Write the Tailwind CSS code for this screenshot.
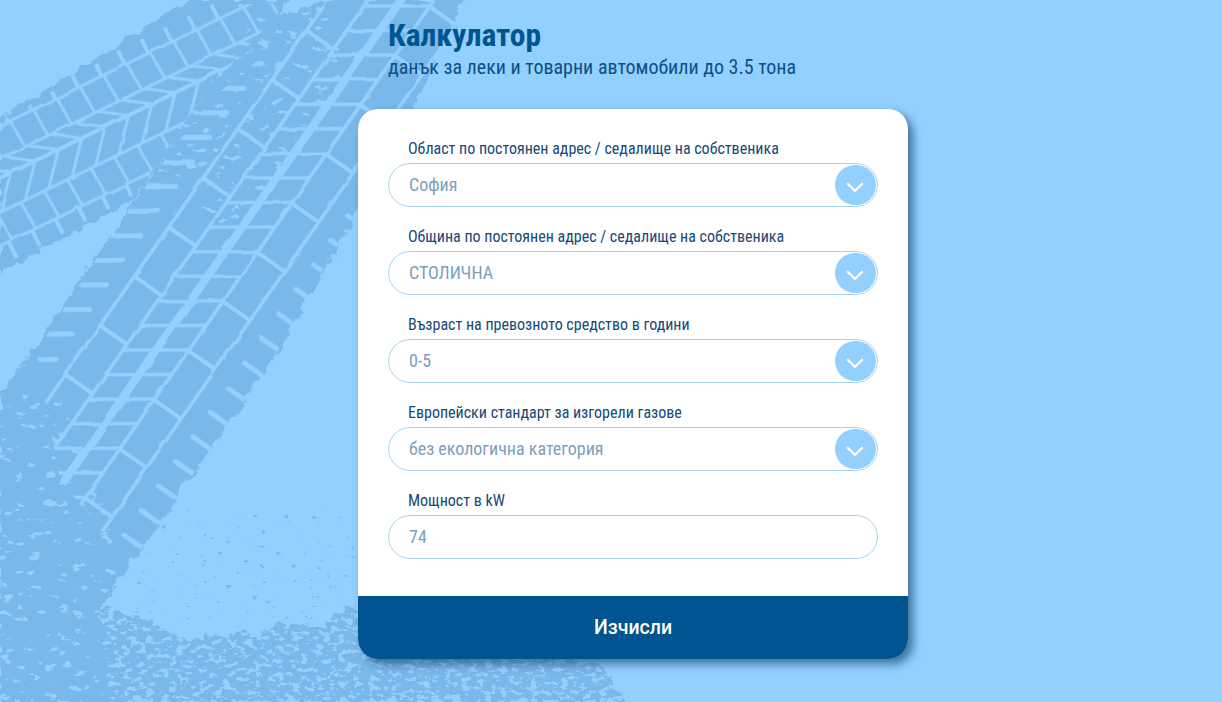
<!DOCTYPE html>
<html lang="bg">
  <head>
    <meta charset="utf-8" />
    <title>Калкулатор</title>
    <script src="https://cdn.jsdelivr.net/npm/@tailwindcss/browser@4"></script>
  </head>
  <body class="bg-[#94d0ff] font-['Roboto',sans-serif]">
    <div class="relative h-[702px] w-[1222px] overflow-hidden">
      <!-- tyre tracks -->
      <svg class="absolute inset-0" width="1222" height="702" viewBox="0 0 1222 702" fill="none">
        <defs>
          <pattern id="trackA" width="26" height="152" patternUnits="userSpaceOnUse" patternTransform="translate(0 178) rotate(-26) translate(0 -67)">
            <g stroke="#94d0ff" fill="none" stroke-width="3">
              <path d="M0 20H26M0 128H26M0 50H26M0 98H26" />
              <path d="M0 67H26" stroke-width="4" />
              <path d="M8 20L10 50M8 98L10 128" />
              <path d="M6 4V20M6 128V146" stroke-width="4" />
              <path d="M-13 50L13 67L-13 98M13 50L39 67L13 98" />
            </g>
          </pattern>
          <pattern id="trackB" width="60" height="204" patternUnits="userSpaceOnUse" patternTransform="translate(156 350) rotate(-55) translate(0 -102)">
            <g stroke="#94d0ff" fill="none" stroke-width="3.5">
              <path d="M0 102H60" stroke-width="8" />
              <path d="M0 75H60M0 129H60M0 162H60M0 42H60" />
              <path d="M-19 75L19 129M11 75L49 129M41 75L79 129" />
              <path d="M18 129V162M48 42V75" stroke-width="4" />
              <path d="M10 182V210M40 182V210M5 -4L25 24M35 -4L55 24" stroke-width="5" stroke-linecap="round" />
            </g>
          </pattern>
          <filter id="edge" x="0" y="0" width="1222" height="702" filterUnits="userSpaceOnUse">
            <feTurbulence type="fractalNoise" baseFrequency="0.09" numOctaves="3" seed="4" result="n" />
            <feDisplacementMap in="SourceGraphic" in2="n" scale="9" />
          </filter>
          <filter id="scratch" x="0" y="0" width="1222" height="702" filterUnits="userSpaceOnUse">
            <feTurbulence type="fractalNoise" baseFrequency="0.035" numOctaves="2" seed="6" result="n" />
            <feDisplacementMap in="SourceGraphic" in2="n" scale="3" />
          </filter>
          <filter id="speck" x="0" y="0" width="1222" height="702" filterUnits="userSpaceOnUse" color-interpolation-filters="sRGB">
            <feTurbulence type="fractalNoise" baseFrequency="0.06" numOctaves="3" seed="8" result="n" />
            <feDisplacementMap in="SourceGraphic" in2="n" scale="26" result="d" />
            <feTurbulence type="fractalNoise" baseFrequency="0.13 0.22" numOctaves="4" seed="3" />
            <feColorMatrix type="matrix" values="0 0 0 0 0 0 0 0 0 0 0 0 0 0 0 14 0 0 0 -7.6" result="holes" />
            <feComposite in="d" in2="holes" operator="out" />
          </filter>
          <filter id="flecks" x="0" y="0" width="1222" height="702" filterUnits="userSpaceOnUse" color-interpolation-filters="sRGB">
            <feTurbulence type="fractalNoise" baseFrequency="0.07 0.13" numOctaves="4" seed="21" />
            <feColorMatrix type="matrix" values="0 0 0 0 0.58 0 0 0 0 0.816 0 0 0 0 1 16 0 0 0 -10.4" result="f" />
            <feComposite in="f" in2="SourceAlpha" operator="in" />
          </filter>
          <filter id="darkFlecks" x="0" y="0" width="1222" height="702" filterUnits="userSpaceOnUse" color-interpolation-filters="sRGB">
            <feTurbulence type="fractalNoise" baseFrequency="0.12 0.2" numOctaves="3" seed="14" />
            <feColorMatrix type="matrix" values="0 0 0 0 0.478 0 0 0 0 0.722 0 0 0 0 0.918 16 0 0 0 -11.7" result="f" />
            <feComposite in="f" in2="SourceAlpha" operator="in" />
          </filter>
        </defs>
        <g filter="url(#edge)" fill="#7ab8ea">
          <path d="M0 118L190 0H290L283 14L193 112L133 200L0 273Z" />
          <path d="M283 14L330 0H465L418 100L280 350L100 607L110 702H0V395L33 350L130 207L193 112Z" />
        </g>
        <g filter="url(#scratch)">
          <path fill="url(#trackA)" d="M0 122L190 4L286 4L200 100L136 194L0 268Z" />
          <path fill="url(#trackB)" d="M330 0H465L418 100L280 350L130 565L60 480L36 352L130 207L210 100Z" />
        </g>
        <path filter="url(#flecks)" fill="#000" d="M0 395H60L110 520L130 700H0Z" />
        <path filter="url(#flecks)" fill="#000" d="M150 170L250 20L340 0L350 60L280 180L230 230Z" />
        <path filter="url(#darkFlecks)" fill="#000" d="M150 510H358V620H130Z" />
        <path filter="url(#speck)" fill="#7ab8ea" d="M100 600L190 640L300 625L358 610L420 650L600 664L625 702H100Z" />
      </svg>

      <main class="relative ml-[358px] w-[550px] pt-[19px]">
        <div class="pl-[30px] text-[#00548f] [font-stretch:75%]">
          <h1 class="text-[31.5px] leading-[33px] font-bold">Калкулатор</h1>
          <p class="mt-[3px] text-[20px] leading-[24px] text-[#0d4f86]">данък за леки и товарни автомобили до 3.5 тона</p>
        </div>

        <form class="mt-[30px] flex h-[550px] flex-col overflow-hidden rounded-[20px] bg-white shadow-[5px_5px_10px_rgba(0,50,90,0.6)]">
          <div class="flex flex-1 flex-col gap-[18px] px-[30px] pt-[28px] [font-stretch:75%]">
            <div>
              <label class="mb-[3px] block pt-px pl-5 text-[16px] leading-[22px] text-[#17497a]">Област по постоянен адрес / седалище на собственика</label>
              <div class="relative h-[44px] rounded-full border border-[#a5d3ec]">
                <select class="h-full w-full appearance-none bg-transparent pb-0.5 pl-5 text-[18px] text-[#7b9fbd] outline-none"><option>София</option></select>
                <span class="absolute top-px right-px flex h-[40px] w-[41px] items-center justify-center rounded-full bg-[#94d0ff] pt-1 pr-0.5">
                  <svg width="18" height="11" viewBox="0 0 18 11" fill="none" stroke="#fff" stroke-width="2.4" stroke-linecap="round" stroke-linejoin="round"><path d="M2 2l7 7 7-7" /></svg>
                </span>
              </div>
            </div>
            <div>
              <label class="mb-[3px] block pt-px pl-5 text-[16px] leading-[22px] text-[#17497a]">Община по постоянен адрес / седалище на собственика</label>
              <div class="relative h-[44px] rounded-full border border-[#a5d3ec]">
                <select class="h-full w-full appearance-none bg-transparent pb-0.5 pl-5 text-[18px] text-[#7b9fbd] outline-none"><option>СТОЛИЧНА</option></select>
                <span class="absolute top-px right-px flex h-[40px] w-[41px] items-center justify-center rounded-full bg-[#94d0ff] pt-1 pr-0.5">
                  <svg width="18" height="11" viewBox="0 0 18 11" fill="none" stroke="#fff" stroke-width="2.4" stroke-linecap="round" stroke-linejoin="round"><path d="M2 2l7 7 7-7" /></svg>
                </span>
              </div>
            </div>
            <div>
              <label class="mb-[3px] block pt-px pl-5 text-[16px] leading-[22px] text-[#17497a]">Възраст на превозното средство в години</label>
              <div class="relative h-[44px] rounded-full border border-[#a5d3ec]">
                <select class="h-full w-full appearance-none bg-transparent pb-0.5 pl-5 text-[18px] text-[#7b9fbd] outline-none"><option>0-5</option></select>
                <span class="absolute top-px right-px flex h-[40px] w-[41px] items-center justify-center rounded-full bg-[#94d0ff] pt-1 pr-0.5">
                  <svg width="18" height="11" viewBox="0 0 18 11" fill="none" stroke="#fff" stroke-width="2.4" stroke-linecap="round" stroke-linejoin="round"><path d="M2 2l7 7 7-7" /></svg>
                </span>
              </div>
            </div>
            <div>
              <label class="mb-[3px] block pt-px pl-5 text-[16px] leading-[22px] text-[#17497a]">Европейски стандарт за изгорели газове</label>
              <div class="relative h-[44px] rounded-full border border-[#a5d3ec]">
                <select class="h-full w-full appearance-none bg-transparent pb-0.5 pl-5 text-[18px] text-[#7b9fbd] outline-none"><option>без екологична категория</option></select>
                <span class="absolute top-px right-px flex h-[40px] w-[41px] items-center justify-center rounded-full bg-[#94d0ff] pt-1 pr-0.5">
                  <svg width="18" height="11" viewBox="0 0 18 11" fill="none" stroke="#fff" stroke-width="2.4" stroke-linecap="round" stroke-linejoin="round"><path d="M2 2l7 7 7-7" /></svg>
                </span>
              </div>
            </div>
            <div>
              <label class="mb-[3px] block pt-px pl-5 text-[16px] leading-[22px] text-[#17497a]">Мощност в kW</label>
              <input value="74" class="h-[44px] w-full rounded-full border border-[#a5d3ec] bg-transparent pb-0.5 pl-5 text-[18px] text-[#7b9fbd] outline-none" />
            </div>
          </div>
          <button type="button" class="h-[63px] bg-[#00548f] text-[19.5px] font-medium text-white">Изчисли</button>
        </form>
      </main>
    </div>
  </body>
</html>
